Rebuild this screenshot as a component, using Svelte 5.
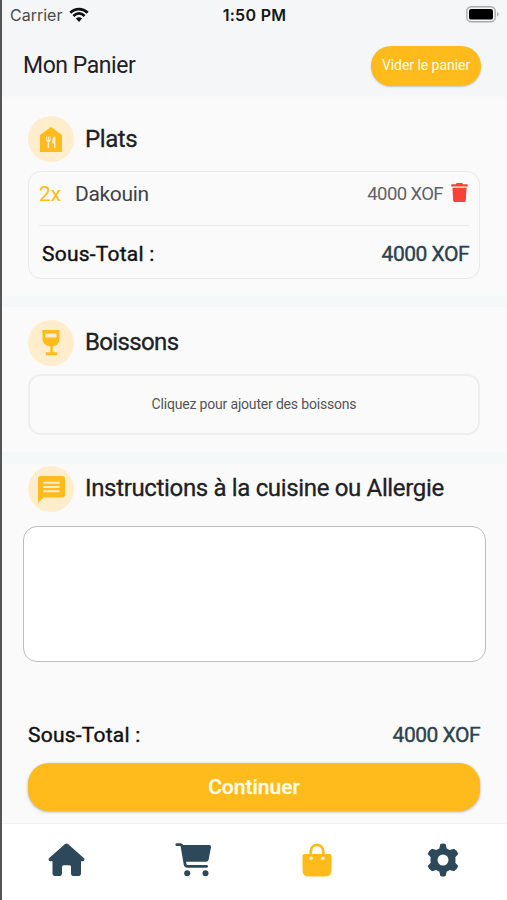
<script>
	const currency = 'XOF';

	let dishes = [{ name: 'Dakouin', quantity: 2, price: 4000 }];
	let instructions = '';

	$: total = dishes.reduce((sum, dish) => sum + dish.price, 0);
</script>

<div class="screen">
	<header>
		<div class="status">
			<div class="carrier">
				<span>Carrier</span>
				<svg width="20" height="16" viewBox="0 0 20 16" aria-hidden="true">
					<path d="M1.3 5.8C6.4.9 13.6.9 18.7 5.8M4.4 9C7.9 5.7 12.1 5.7 15.6 9" />
					<path class="dot" d="M6.9 11.6C8.7 9.9 11.3 9.9 13.1 11.6L10 14.9Z" />
				</svg>
			</div>
			<strong>1:50 PM</strong>
			<svg class="battery" width="33" height="17" viewBox="0 0 33 17" aria-hidden="true">
				<rect x=".8" y=".8" width="28.4" height="15" rx="4.5" />
				<rect class="charge" x="3" y="3" width="24" height="10.6" rx="2.2" />
				<path d="M31 6v4.6q1.5-.6 1.5-2.3T31 6" />
			</svg>
		</div>
		<div class="title">
			<h1>Mon Panier</h1>
			<button class="clear" on:click={() => (dishes = [])}>Vider le panier</button>
		</div>
	</header>

	<main>
		<section class="dishes">
			<div class="heading">
				<span class="bubble">
					<svg width="22" height="25" viewBox="0 0 22 25" aria-hidden="true">
						<path d="M11 0 22 8V25H0V8Z" />
						<path class="cut" d="M6.2 9.5h1v3.2h.7V9.5h1v3.2h.7V9.5h1v3.8q0 1.5-1.4 1.9V21H7.7v-5.8q-1.5-.4-1.5-1.9ZM15.4 9.2V21H14v-4.5h-1.8V13q.3-3 3.2-3.8Z" />
					</svg>
				</span>
				<h2 class="plats">Plats</h2>
			</div>
			<div class="card">
				{#each dishes as dish}
					<div class="dish">
						<span class="quantity">{dish.quantity}x</span>
						<span class="name">{dish.name}</span>
						<span class="price">{dish.price} {currency}</span>
						<svg class="trash" width="17" height="20" viewBox="0 0 17 20" aria-hidden="true">
							<path d="M5.8 0h5.4l1 1.2H16q.8 0 .8.9v1.3H.2V2.1q0-.9.8-.9h3.8ZM1.4 4.8h14.2l-.8 12.7Q14.6 19 12.8 19H4.2q-1.8 0-2-1.500Z" />
						</svg>
					</div>
				{/each}
				<div class="subtotal">
					<span>Sous-Total :</span>
					<span class="amount">{total} {currency}</span>
				</div>
			</div>
		</section>

		<section class="drinks">
			<div class="heading">
				<span class="bubble">
					<svg width="18" height="26" viewBox="0 0 18 26" aria-hidden="true">
						<path d="M.5 0h17v8.5q0 6.8-6.8 8v5.8h4.5v3H3.8v-3h4.5v-5.8q-7.8-1.2-7.8-8Z" />
						<path class="cut" d="M3.5 3.5h11v4h-11z" />
					</svg>
				</span>
				<h2 class="boissons">Boissons</h2>
			</div>
			<button class="add">Cliquez pour ajouter des boissons</button>
		</section>

		<section class="notes">
			<div class="heading">
				<span class="bubble">
					<svg width="27" height="27" viewBox="0 0 27 27" aria-hidden="true">
						<path d="M2.7 0h21.6Q27 0 27 2.7v16.1q0 2.7-2.7 2.7H5.4L0 27V2.7Q0 0 2.7 0Z" />
						<path class="lines" d="M5.400 6.800h16.200M5.400 11h16.200M5.400 15.300h16.200" />
					</svg>
				</span>
				<h2 class="instructions">Instructions à la cuisine ou Allergie</h2>
			</div>
			<textarea bind:value={instructions} aria-label="Instructions"></textarea>
		</section>

		<div class="total">
			<span>Sous-Total :</span>
			<span class="amount">{total} {currency}</span>
		</div>
		<button class="continue">Continuer</button>
	</main>

	<nav>
		<svg width="37" height="34" viewBox="0 0 37 34" aria-hidden="true">
			<path d="M17 1Q18.5-.2 20 1L36 15.2q1.3 2.6-1.4 3H33v12q0 2.8-2.8 2.8h-4.4Q23 33 23 30.2v-6.5q0-1.5-1.5-1.5h-6q-1.5 0-1.5 1.5v6.5Q14 33 11.2 33H7.3q-2.8 0-2.8-2.8v-12H2.4q-2.7-.4-1.4-3Z" />
		</svg>
		<svg width="37" height="34" viewBox="0 0 37 34" aria-hidden="true">
			<path d="M6.500 2h27.700q2.200 0 1.800 2.200l-2.400 12.500q-.5 2-2.500 2H10Z" />
			<path class="stroke" d="M1.8 1.7h3.4q1.5 0 1.8 1.6l3.1 18q.4 2.100 2.500 2.100h19" />
			<circle cx="12.2" cy="30.3" r="3" />
			<circle cx="30.5" cy="30.3" r="3" />
		</svg>
		<svg class="active" width="30" height="34" viewBox="0 0 30 34" aria-hidden="true">
			<path class="stroke" d="M8.8 14V8a6.2 6.2 0 0 1 12.4 0v6" />
			<path d="M2.3 11h25.4q1.8 0 1.8 1.8v14.4q0 6.3-6.3 6.3H6.8Q.5 33.5.5 27.2V12.8Q.5 11 2.3 11Z" />
			<circle class="hole" cx="9" cy="15.3" r="1.8" />
			<circle class="hole" cx="20.8" cy="15.3" r="1.8" />
		</svg>
		<svg width="34" height="34" viewBox="0 0 34 34" aria-hidden="true">
			<path fill-rule="evenodd" d="M14.4 1Q17-.2 19.6 1L20.7 5.400Q22.2 6 23.7 7L28 5.800Q31 7.300 32.300 10.900L29.300 14.300Q29.700 17 29.300 19.700L32.300 23.100Q31 26.700 28 28.200L23.700 27Q22.200 28 20.700 28.600L19.600 33Q17 34.200 14.400 33L13.300 28.600Q11.800 28 10.300 27L6 28.200Q3 26.700 1.700 23.100L4.700 19.700Q4.300 17 4.700 14.300L1.700 10.900Q3 7.300 6 5.800L10.300 7Q11.800 6 13.300 5.400ZM17 11.500a5.500 5.500 0 1 0 0 11 5.500 5.500 0 0 0 0-11Z" />
		</svg>
	</nav>
</div>

<style>
	:global(body) {
		margin: 0;
		background: #fafafa;
	}

	.screen {
		box-sizing: border-box;
		display: flex;
		flex-direction: column;
		height: 900px;
		border-left: 2px solid #555557;
		background: #fafafa;
		color: #202124;
		font-family: Roboto, 'Liberation Sans', sans-serif;
	}

	* {
		box-sizing: border-box;
	}

	button {
		border: 0;
		padding: 0;
		font-family: inherit;
		cursor: pointer;
	}

	h1,
	h2 {
		margin: 0;
		font-weight: 400;
	}

	span,
	h1,
	h2,
	strong {
		white-space: nowrap;
	}

	header {
		height: 101px;
		background: linear-gradient(#f5f6f8 94%, #fafafa);
	}

	.status {
		display: grid;
		grid-template-columns: 1fr auto 1fr;
		align-items: center;
		height: 30px;
		padding: 0 8px 0 8px;
		font-family: Inter, sans-serif;
		font-size: 16px;
	}

	.status strong {
		font-weight: 600;
		font-size: 16px;
		letter-spacing: 0.3px;
		color: #151515;
	}

	.carrier {
		display: flex;
		align-items: center;
		gap: 7px;
		color: #4a4b4e;
	}

	.carrier path {
		fill: none;
		stroke: #111;
		stroke-width: 2.8;
	}

	.carrier .dot {
		fill: #111;
		stroke: none;
	}

	.battery {
		justify-self: end;
		margin-top: -2px;
		fill: #aaa;
	}

	.battery rect {
		fill: none;
		stroke: #aaa;
		stroke-width: 1.4;
	}

	.battery .charge {
		fill: #000;
		stroke: none;
	}

	.title {
		display: flex;
		align-items: flex-start;
		justify-content: space-between;
		padding: 16px 26px 0 21px;
	}

	h1 {
		line-height: 40px;
		font-size: 23px;
		letter-spacing: -0.45px;
	}

	.clear {
		width: 110px;
		height: 40px;
		padding-bottom: 3px;
		border-radius: 20px;
		background: #ffbb1c;
		box-shadow: 0 1px 2px rgba(0, 0, 0, 0.2);
		color: #fffbe8;
		font-size: 14px;
		letter-spacing: -0.05px;
	}

	main {
		flex: 1;
	}

	section {
		padding: 0 27px 0 26px;
	}

	.dishes {
		height: 195px;
		padding-top: 15px;
	}

	.drinks {
		height: 156px;
		padding-top: 13px;
		border-top: 11px solid #f5f8f8;
	}

	.notes {
		height: 210px;
		padding: 2px 21px 0;
		border-top: 12px solid #f5f8f8;
	}

	.notes .heading {
		padding-left: 5px;
	}

	.heading {
		display: flex;
		align-items: center;
		gap: 11px;
		height: 46px;
	}

	.bubble {
		display: flex;
		align-items: center;
		justify-content: center;
		width: 46px;
		height: 46px;
		border-radius: 50%;
		background: #ffedcc;
		fill: #ffbb1c;
	}

	.cut {
		fill: #ffedcc;
	}

	.lines {
		stroke: #ffedcc;
		stroke-width: 2;
	}

	h2 {
		font-size: 24px;
		line-height: 44px;
		padding-bottom: 2px;
		-webkit-text-stroke: 0.3px;
	}

	.plats {
		padding-bottom: 0;
		letter-spacing: -0.4px;
	}

	.boissons {
		letter-spacing: -0.65px;
	}

	.instructions {
		letter-spacing: -0.34px;
	}

	.card {
		height: 108px;
		margin-top: 9px;
		padding: 0 10px;
		border: 1px solid #e9e9ea;
		border-radius: 13px;
	}

	.dish {
		display: flex;
		align-items: center;
		height: 54px;
		padding-bottom: 9px;
		border-bottom: 1px solid #ebebeb;
		color: #404144;
		font-size: 21px;
	}

	.quantity {
		width: 36px;
		color: #ffbb1c;
	}

	.name {
		letter-spacing: -0.35px;
	}

	.price {
		margin-left: auto;
		color: #606266;
		font-size: 18.5px;
		letter-spacing: -0.6px;
	}

	.trash {
		margin: 0 1px 2px 8px;
		fill: #f84235;
	}

	.subtotal,
	.total {
		display: flex;
		align-items: center;
		justify-content: space-between;
		color: #111;
		font-size: 21px;
		letter-spacing: 0.22px;
		-webkit-text-stroke: 0.4px;
	}

	.subtotal {
		height: 55px;
		padding: 0 0 0 3px;
	}

	.amount {
		color: #2d4250;
		letter-spacing: -0.5px;
	}

	.add {
		display: block;
		width: 100%;
		height: 61px;
		margin-top: 8px;
		padding-bottom: 2px;
		border: 2px solid #eee;
		border-radius: 13px;
		background: none;
		color: #555;
		font-size: 14px;
		letter-spacing: -0.18px;
	}

	textarea {
		display: block;
		width: 100%;
		height: 136px;
		margin-top: 14px;
		padding: 12px;
		border: 1px solid #bdbdbd;
		border-radius: 14px;
		background: #fff;
		font: inherit;
		resize: none;
	}

	.total {
		height: 40px;
		margin: 53px 27px 0 26px;
	}

	.continue {
		display: block;
		width: 452px;
		height: 48px;
		margin: 8px 26px 0;
		border-radius: 21px;
		background: #ffbb1c;
		box-shadow: 0 1px 3px rgba(0, 0, 0, 0.3);
		color: #fffbe8;
		font-size: 21px;
		font-weight: 500;
		-webkit-text-stroke: 0.3px;
	}

	nav {
		display: flex;
		align-items: flex-start;
		justify-content: space-between;
		height: 77px;
		padding: 19px 47px 0 46px;
		border-top: 1px solid #f3f3f3;
		background: #fff;
		fill: #2d475b;
	}

	nav svg:nth-child(2) {
		margin-left: -2px;
	}

	nav .active {
		margin: 0 2px 0 -2px;
	}

	nav .stroke {
		fill: none;
		stroke: #2d475b;
		stroke-width: 2.8;
		stroke-linecap: round;
	}

	.active {
		fill: #ffbb1c;
	}

	nav .active .stroke {
		stroke: #ffbb1c;
	}

	.hole {
		fill: #fff3d0;
	}
</style>
